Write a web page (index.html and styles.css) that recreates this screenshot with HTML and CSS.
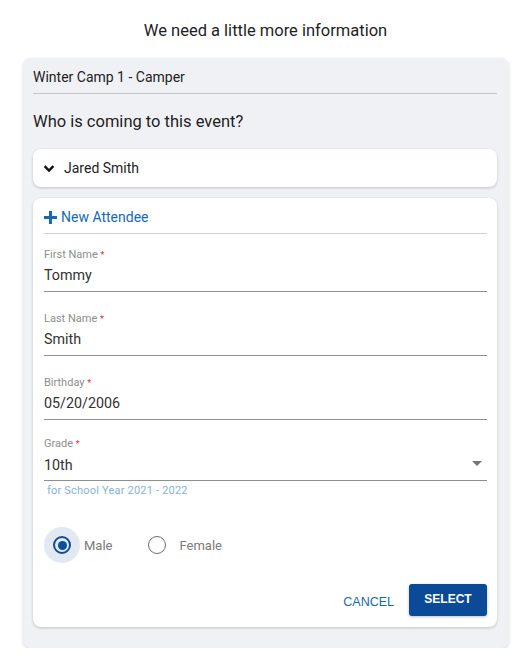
FILE: index.html
```html
<!DOCTYPE html>
<html>
<head>
<meta charset="utf-8">
<link rel="stylesheet" href="styles.css">
</head>
<body>
<h1 class="title">We need a little more information</h1>
<div class="panel">
  <div class="event">Winter Camp 1 - Camper</div>
  <h2 class="question">Who is coming to this event?</h2>
  <div class="card attendee-row">
    <svg class="chevron" width="12" height="10" viewBox="0 0 12 10"><path d="M1.6 2.2 L6 6.6 L10.4 2.2" fill="none" stroke="#111" stroke-width="2.4"/></svg>
    <span>Jared Smith</span>
  </div>
  <div class="card form-card">
    <div class="new-attendee">
      <svg class="plus" width="13" height="13" viewBox="0 0 13 13"><rect x="5" y="0" width="3" height="13" fill="#1469b8"/><rect x="0" y="5" width="13" height="3" fill="#1469b8"/></svg>
      <span>New Attendee</span>
    </div>
    <div class="field first">
      <div class="label">First Name <span class="req">*</span></div>
      <div class="value">Tommy</div>
    </div>
    <div class="field">
      <div class="label">Last Name <span class="req">*</span></div>
      <div class="value">Smith</div>
    </div>
    <div class="field">
      <div class="label">Birthday <span class="req">*</span></div>
      <div class="value">05/20/2006</div>
    </div>
    <div class="field select">
      <div class="label">Grade <span class="req">*</span></div>
      <div class="value">10th</div>
      <span class="arrow"></span>
    </div>
    <div class="helper">for School Year 2021 - 2022</div>
    <div class="radios">
      <div class="radio-item">
        <span class="halo checked"><span class="radio on"><span class="dot"></span></span></span>
        <span class="radio-label">Male</span>
      </div>
      <div class="radio-item female">
        <span class="halo"><span class="radio"></span></span>
        <span class="radio-label">Female</span>
      </div>
    </div>
    <div class="actions">
      <button class="btn-text">CANCEL</button>
      <button class="btn-primary">SELECT</button>
    </div>
  </div>
</div>
</body>
</html>
```

FILE: styles.css
```css
html, body {
  margin: 0;
  padding: 0;
  background: #ffffff;
  font-family: Roboto, "Noto Sans", sans-serif;
  color: #222;
}

.title {
  margin: 19px 0 15px;
  padding-left: 6px;
  font-size: 16.5px;
  line-height: 24px;
  font-weight: 400;
  text-align: center;
  color: #1e1e1e;
}

.panel {
  margin: 0 16px 0 23px;
  padding: 9px 12px 21px 10px;
  background: #f0f1f5;
  border-radius: 8px;
  box-shadow: 0 1px 3px rgba(0, 0, 0, 0.16);
}

.event {
  font-size: 14px;
  line-height: 20px;
  padding-bottom: 6px;
  border-bottom: 1px solid #c6c6c8;
  color: #222;
}

.question {
  margin: 16px 0 15px;
  font-size: 16.5px;
  line-height: 24px;
  font-weight: 400;
  color: #1e1e1e;
}

.card {
  background: #fff;
  border-radius: 8px;
  box-shadow: 0 1px 3px rgba(0, 0, 0, 0.2);
}

.attendee-row {
  height: 38px;
  display: flex;
  align-items: center;
  padding-left: 10px;
  font-size: 14px;
  color: #222;
}

.chevron {
  margin-right: 9px;
  margin-top: 1px;
}

.form-card {
  margin-top: 11px;
  padding: 9px 10px 11px 11px;
}

.new-attendee {
  display: flex;
  align-items: center;
  font-size: 14px;
  line-height: 20px;
  color: #1469b8;
  padding-bottom: 6px;
  border-bottom: 1px solid #cfcfcf;
}

.plus {
  margin-right: 4px;
}

.field {
  position: relative;
  margin-top: 20px;
  padding-bottom: 6px;
  border-bottom: 1px solid #8e8e8e;
}

.field.first {
  margin-top: 14px;
}

.label {
  font-size: 11px;
  line-height: 14px;
  color: #8e8e8e;
}

.req {
  color: #e0303a;
  font-size: 9px;
}

.value {
  margin-top: 3px;
  font-size: 14.3px;
  line-height: 20px;
  color: #333;
}

.field.select {
  margin-top: 17px;
  padding-bottom: 4px;
}

.field.select .value {
  line-height: 22px;
}

.arrow {
  position: absolute;
  right: 5px;
  top: 24px;
  width: 0;
  height: 0;
  border-left: 5px solid transparent;
  border-right: 5px solid transparent;
  border-top: 5px solid #757575;
}

.helper {
  margin-top: 3px;
  padding-left: 3px;
  font-size: 11px;
  line-height: 14px;
  letter-spacing: 0.2px;
  color: #86b3dc;
}

.radios {
  margin-top: 29px;
  display: flex;
  align-items: center;
  height: 36px;
}

.radio-item {
  display: flex;
  align-items: center;
}

.radio-item.female {
  margin-left: 27px;
}

.halo {
  width: 36px;
  height: 36px;
  border-radius: 50%;
  display: flex;
  align-items: center;
  justify-content: center;
}

.halo.checked {
  background: #e3e9f2;
}

.radio {
  box-sizing: border-box;
  width: 18px;
  height: 18px;
  border-radius: 50%;
  border: 1.5px solid #6e6e6e;
  display: flex;
  align-items: center;
  justify-content: center;
}

.radio.on {
  border: 2px solid #0d4d9a;
}

.dot {
  width: 9px;
  height: 9px;
  border-radius: 50%;
  background: #0d4d9a;
}

.radio-label {
  margin-left: 4px;
  font-size: 13px;
  color: #7a7a7a;
}

.actions {
  margin-top: 21px;
  display: flex;
  justify-content: flex-end;
  align-items: center;
}

.btn-text {
  background: none;
  border: none;
  padding: 0;
  margin-right: 15px;
  margin-top: 3px;
  font-family: "Liberation Sans", Arial, sans-serif;
  font-size: 12.5px;
  color: #0f6bb5;
}

.btn-primary {
  width: 78px;
  height: 32px;
  border: none;
  border-radius: 3px;
  background: #0a4a97;
  color: #fff;
  font-family: "Liberation Sans", Arial, sans-serif;
  font-size: 12px;
  font-weight: 700;
  padding: 0 0 3px;
  box-shadow: 0 1px 3px rgba(0, 0, 0, 0.25);
}
```
